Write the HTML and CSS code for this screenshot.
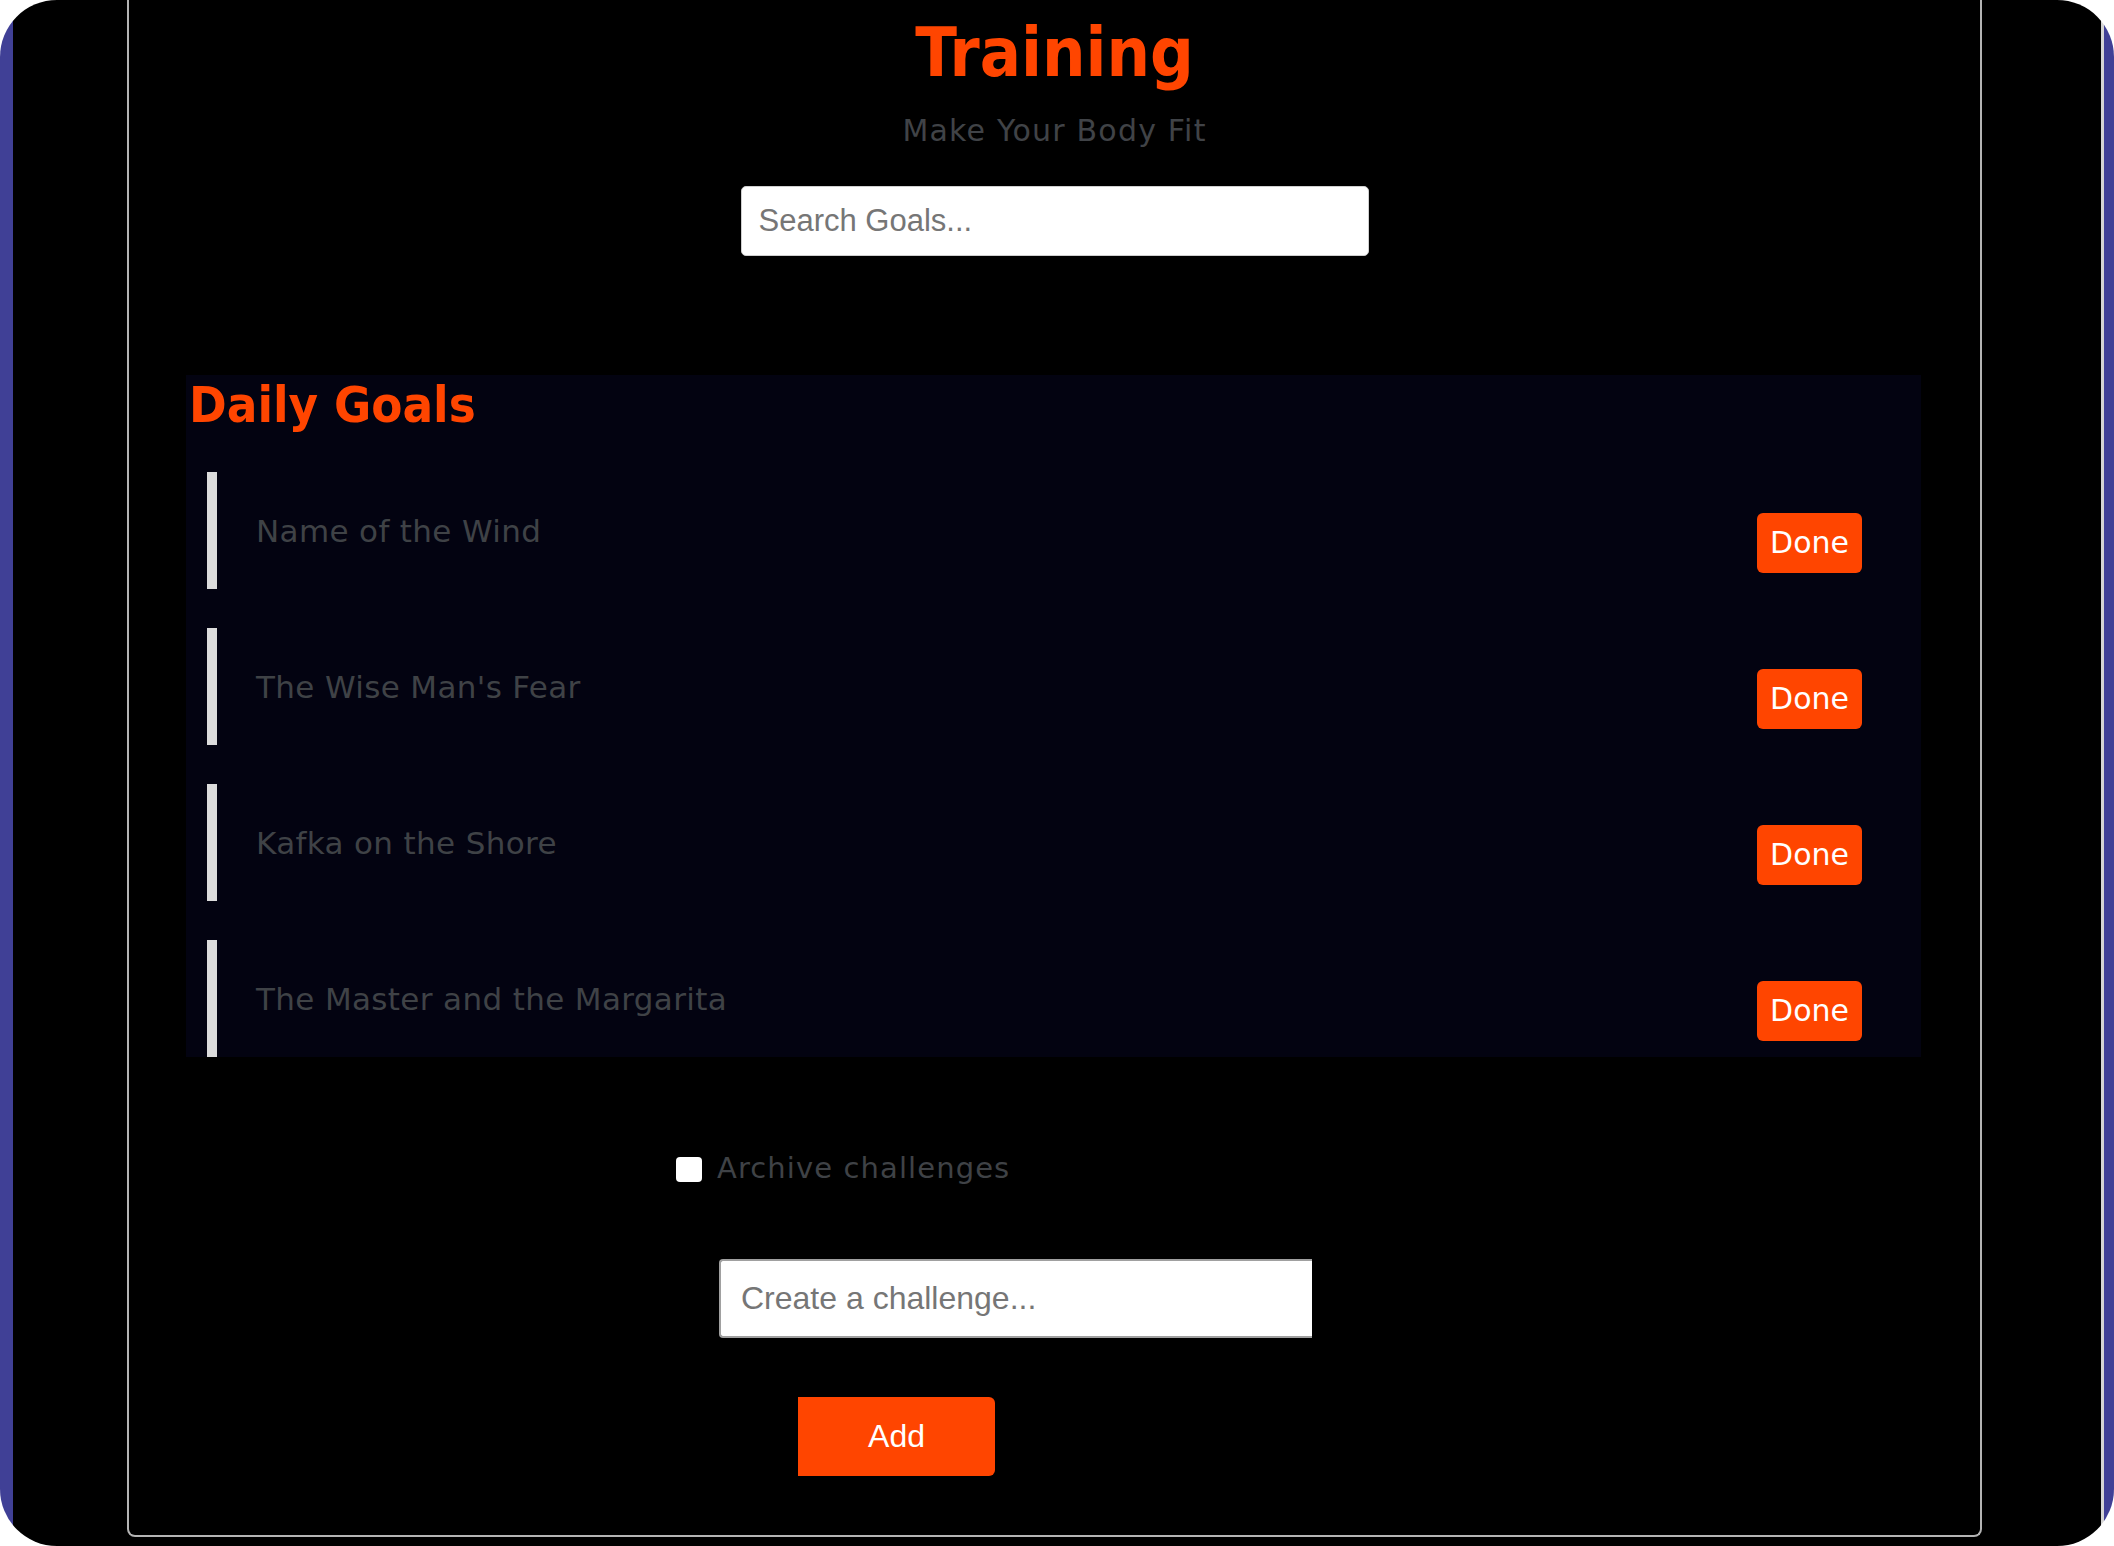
FILE: index.html
```html
<!DOCTYPE html>
<html lang="en">
<head>
<meta charset="utf-8">
<title>Training</title>
<link rel="stylesheet" href="styles.css">
</head>
<body>
<div class="frame">
  <div class="container">
    <h1 class="title">Training</h1>
    <p class="subtitle">Make Your Body Fit</p>
    <input class="search" type="text" placeholder="Search Goals...">

    <section class="panel">
      <h2 class="panel-title">Daily Goals</h2>
      <ul class="goals">
        <li class="goal"><span class="goal-name">Name of the Wind</span><button class="done">Done</button></li>
        <li class="goal"><span class="goal-name">The Wise Man's Fear</span><button class="done">Done</button></li>
        <li class="goal"><span class="goal-name">Kafka on the Shore</span><button class="done">Done</button></li>
        <li class="goal"><span class="goal-name">The Master and the Margarita</span><button class="done">Done</button></li>
      </ul>
    </section>

    <div class="create">
      <label class="archive"><input class="check" type="checkbox"><span>Archive challenges</span></label>
      <input class="new-challenge" type="text" placeholder="Create a challenge...">
      <button class="add">Add</button>
    </div>
  </div>
</div>
</body>
</html>
```

FILE: styles.css
```css
html, body {
  margin: 0;
  padding: 0;
  background: #ffffff;
}

.frame {
  box-sizing: border-box;
  width: 2114px;
  height: 1546px;
  padding: 0 13px;
  background: linear-gradient(to right,
    #404096 0, #404096 13px,
    #000000 13px, #000000 2101px,
    #d4d4d4 2101px, #d4d4d4 2104px,
    #404096 2104px, #404096 2114px);
  border-radius: 57px;
  overflow: hidden;
  font-family: "DejaVu Sans", Verdana, sans-serif;
}

.container {
  box-sizing: border-box;
  margin-left: 114px;
  width: 1855px;
  height: 1537px;
  border: 2px solid #b4b4b4;
  border-top: none;
  border-radius: 0 0 8px 8px;
  display: flex;
  flex-direction: column;
  align-items: stretch;
}

.title {
  margin: 13px 0 0;
  font-family: "DejaVu Sans Condensed", "DejaVu Sans", sans-serif;
  font-stretch: semi-condensed;
  font-weight: bold;
  font-size: 68px;
  line-height: 80px;
  color: #ff4500;
  text-align: center;
}

.subtitle {
  margin: 20px 0 0;
  font-size: 30px;
  letter-spacing: 1.2px;
  line-height: 36px;
  color: #404347;
  text-align: center;
}

.search {
  box-sizing: border-box;
  align-self: center;
  width: 628px;
  height: 70px;
  margin-top: 37px;
  padding: 0 17px;
  border: 1px solid #cfcfcf;
  border-radius: 5px;
  background: #ffffff;
  font-family: "Liberation Sans", Arial, sans-serif;
  font-size: 31px;
  color: #333;
  outline: none;
}

.search::placeholder,
.new-challenge::placeholder {
  color: #767676;
}

.panel {
  margin: 119px 59px 0 57px;
  background: #030311;
}

.panel-title {
  margin: 0;
  padding-left: 3px;
  font-family: "DejaVu Sans Condensed", "DejaVu Sans", sans-serif;
  font-stretch: semi-condensed;
  font-weight: bold;
  font-size: 50.5px;
  line-height: 60px;
  color: #ff4500;
}

.goals {
  list-style: none;
  margin: 37px 0 0;
  padding: 0;
  display: flex;
  flex-direction: column;
  gap: 39px;
}

.goal {
  box-sizing: border-box;
  height: 117px;
  margin: 0 20px 0 21px;
  padding: 0 39px 0 39px;
  border-left: 10px solid #dcdcdc;
  display: flex;
  align-items: center;
  justify-content: space-between;
}

.goal-name {
  font-size: 31px;
  letter-spacing: 0.35px;
  color: #3f4246;
}

.done {
  margin-top: 24px;
  padding: 12px 13px;
  border: none;
  border-radius: 6px;
  background: #ff4500;
  color: #ffffff;
  font-family: "DejaVu Sans", Verdana, sans-serif;
  font-size: 30px;
  line-height: 36px;
}

.create {
  display: flex;
  flex-direction: column;
  align-items: flex-start;
}

.archive {
  margin: 94px 0 0 547px;
  height: 34px;
  display: flex;
  align-items: center;
  gap: 15px;
  font-size: 29px;
  letter-spacing: 1.1px;
  line-height: 34px;
  color: #3f4246;
}

.check {
  appearance: none;
  -webkit-appearance: none;
  margin: 3px 0 0;
  width: 26px;
  height: 25px;
  background: #ffffff;
  border-radius: 4px;
}

.new-challenge {
  box-sizing: border-box;
  margin: 74px 0 0 590px;
  width: 593px;
  height: 79px;
  padding: 0 20px;
  border: 2px solid #a0a0a0;
  border-right: none;
  border-radius: 4px 0 0 4px;
  background: #ffffff;
  font-family: "Liberation Sans", Arial, sans-serif;
  font-size: 32px;
  color: #333;
  outline: none;
}

.add {
  margin: 59px 0 0 669px;
  width: 197px;
  height: 79px;
  border: none;
  border-radius: 0 6px 6px 0;
  background: #ff4500;
  color: #ffffff;
  font-family: "Liberation Sans", Arial, sans-serif;
  font-size: 32px;
}
```
